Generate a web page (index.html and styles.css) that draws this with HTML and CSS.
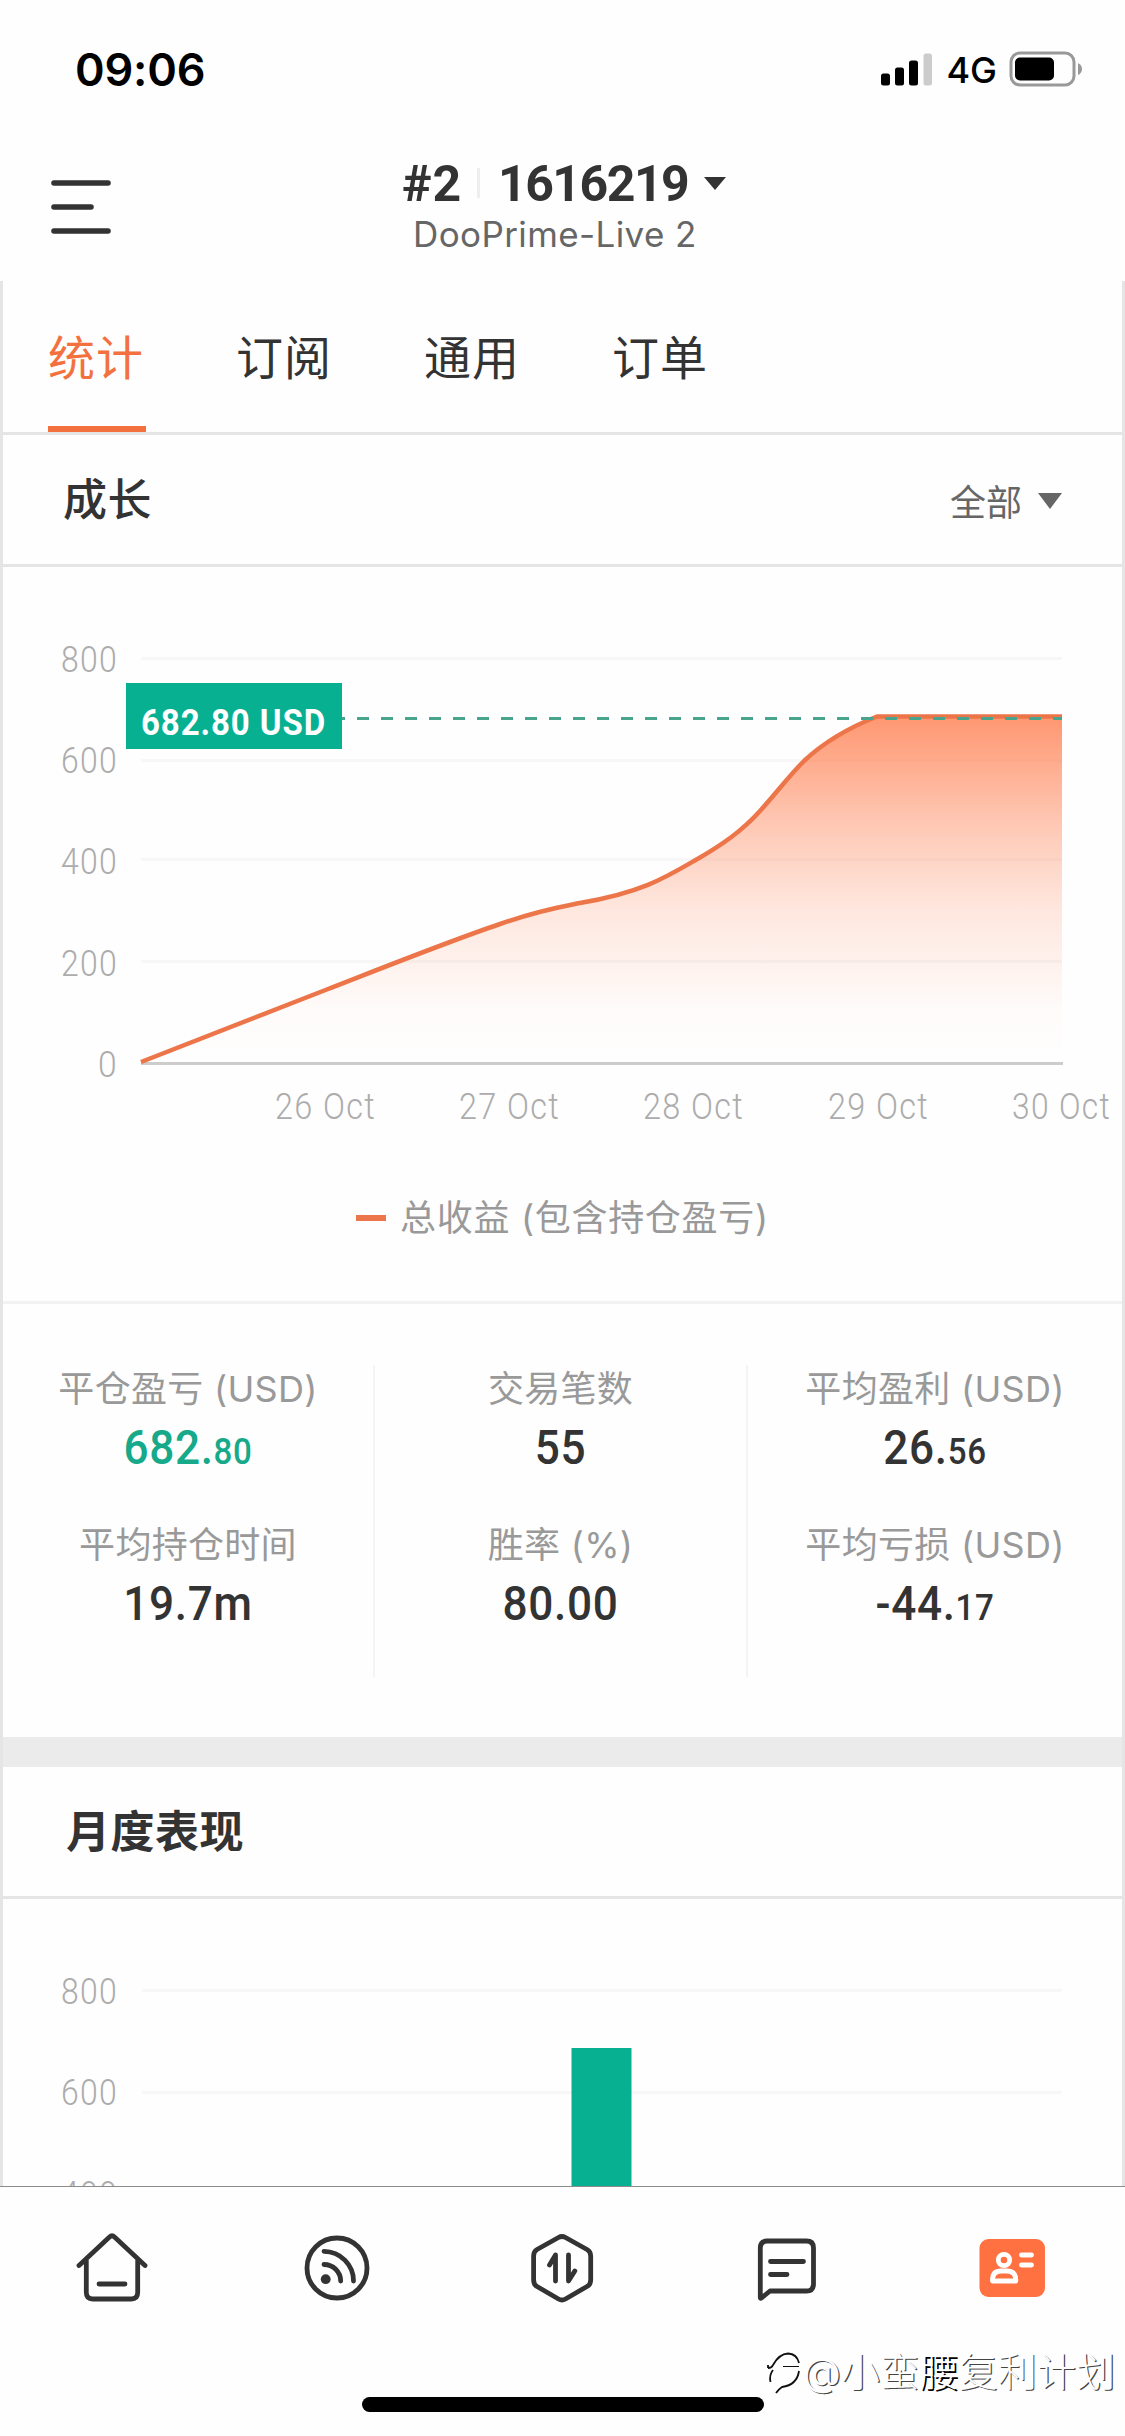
FILE: index.html
```html
<!DOCTYPE html>
<html lang="zh-CN">
<head>
<meta charset="utf-8">
<title>DooPrime-Live 2</title>
<link rel="stylesheet" href="styles.css">
</head>
<body>
<div class="phone">
  <header class="status">
    <span class="clock">09:06</span>
    <div class="status-icons">
      <svg class="signal" width="51" height="33" viewBox="0 0 51 33">
        <rect x="0" y="20.500" width="9" height="12" rx="2.500"/>
        <rect x="14" y="14.500" width="9" height="18" rx="2.500"/>
        <rect x="28" y="7.500" width="9" height="25" rx="2.500"/>
        <rect x="42.500" y="0.500" width="8.500" height="32" rx="2.500" fill="#ccc"/>
      </svg>
      <span class="network">4G</span>
      <svg class="battery" width="74" height="36" viewBox="0 0 74 36">
        <rect x="2" y="2" width="63" height="32" rx="9" fill="none" stroke="#999" stroke-width="3"/>
        <rect x="6" y="6.500" width="39" height="23" rx="5"/>
        <path d="M69 12 Q73 14 73 18 Q73 22 69 24 Z" fill="#999"/>
      </svg>
    </div>
  </header>

  <div class="topbar">
    <svg class="menu" width="62" height="56" viewBox="0 0 62 56" stroke="#333" stroke-width="5.600" stroke-linecap="round">
      <path d="M3 4H57M3 28H40M3 52H57"/>
    </svg>
    <div class="account">
      <div class="account-id">
        <span class="num rank">#2</span><i class="sep"></i><span class="num login">1616219</span>
        <svg width="22" height="13" viewBox="0 0 22 13"><path d="M0 0H22L11 13Z" fill="#333"/></svg>
      </div>
      <div class="server">DooPrime-Live 2</div>
    </div>
  </div>

  <main class="content">
    <nav class="tabs">
      <span class="tab active">统计</span><span class="tab">订阅</span><span class="tab">通用</span><span class="tab">订单</span>
    </nav>

    <section>
      <div class="section-head">
        <h2>成长</h2>
        <span class="filter">全部<svg width="24" height="16" viewBox="0 0 24 16"><path d="M0 0H24L12 16Z" fill="#666"/></svg></span>
      </div>
      <svg class="growth" width="1119" height="593" viewBox="3 567 1119 593">
        <defs>
          <linearGradient id="area" gradientUnits="userSpaceOnUse" x1="0" y1="717" x2="0" y2="1063">
            <stop offset="0" stop-color="#ff7340" stop-opacity=".74"/>
            <stop offset=".3" stop-color="#ff7340" stop-opacity=".4"/>
            <stop offset=".55" stop-color="#ff7340" stop-opacity=".17"/>
            <stop offset=".85" stop-color="#ff7340" stop-opacity=".02"/>
            <stop offset="1" stop-color="#ff7340" stop-opacity="0"/>
          </linearGradient>
        </defs>
        <path d="M141 658.500H1062M141 760.500H1062M141 859.500H1062M141 961.500H1062" stroke="#f7f7f7" stroke-width="3"/>
        <path d="M141 1063.500H1063" stroke="#ccc" stroke-width="3"/>
        <path d="M141 1062L325.500 990C400 961 450 941 500 924C540 910 560 907 580 903C640 893 665 878 694 861C722 845 742 831 760 811C778 791 789 776 804 761C824 742 848 728 877 716.500H1062V1062Z" fill="url(#area)"/>
        <path d="M141 1062L325.500 990C400 961 450 941 500 924C540 910 560 907 580 903C640 893 665 878 694 861C722 845 742 831 760 811C778 791 789 776 804 761C824 742 848 728 877 716.500H1062" fill="none" stroke="#ec7549" stroke-width="4.500"/>
        <path d="M333 718.500H1062" stroke="#48a48c" stroke-width="3" stroke-dasharray="12 12"/>
        <rect x="126" y="683" width="216" height="66" fill="#08b092"/>
        <text class="badge-text" x="141" y="735" textLength="185" lengthAdjust="spacingAndGlyphs">682.80 USD</text>
        <g class="axis">
          <text x="61" y="672" textLength="57" lengthAdjust="spacingAndGlyphs">800</text>
          <text x="61" y="773" textLength="57" lengthAdjust="spacingAndGlyphs">600</text>
          <text x="61" y="874" textLength="57" lengthAdjust="spacingAndGlyphs">400</text>
          <text x="61" y="976" textLength="57" lengthAdjust="spacingAndGlyphs">200</text>
          <text x="98" y="1077" textLength="20" lengthAdjust="spacingAndGlyphs">0</text>
          <text x="275" y="1119" textLength="101" lengthAdjust="spacingAndGlyphs">26 Oct</text>
          <text x="459" y="1119" textLength="101" lengthAdjust="spacingAndGlyphs">27 Oct</text>
          <text x="643" y="1119" textLength="101" lengthAdjust="spacingAndGlyphs">28 Oct</text>
          <text x="828" y="1119" textLength="101" lengthAdjust="spacingAndGlyphs">29 Oct</text>
          <text x="1012" y="1119" textLength="99" lengthAdjust="spacingAndGlyphs">30 Oct</text>
        </g>
      </svg>
      <div class="legend"><i></i><span>总收益 (包含持仓盈亏)</span></div>
      <div class="stats">
        <div class="col">
          <div class="label">平仓盈亏 (USD)</div><div class="value green">682.<small>80</small></div>
          <div class="label">平均持仓时间</div><div class="value">19.7m</div>
        </div>
        <div class="col">
          <div class="label">交易笔数</div><div class="value">55</div>
          <div class="label">胜率 (%)</div><div class="value">80.00</div>
        </div>
        <div class="col">
          <div class="label">平均盈利 (USD)</div><div class="value">26.<small>56</small></div>
          <div class="label">平均亏损 (USD)</div><div class="value">-44.<small>17</small></div>
        </div>
      </div>
    </section>

    <section class="monthly">
      <div class="section-head"><h2 class="bold">月度表现</h2></div>
      <svg class="bars" width="1119" height="287" viewBox="3 1899 1119 287">
        <path d="M142 1990.500H1062M142 2092.500H1062" stroke="#f7f7f7" stroke-width="3"/>
        <rect x="571.500" y="2048" width="60" height="138" fill="#08b092"/>
        <g class="axis">
          <text x="61" y="2004" textLength="57" lengthAdjust="spacingAndGlyphs">800</text>
          <text x="61" y="2105" textLength="57" lengthAdjust="spacingAndGlyphs">600</text>
          <text x="61" y="2206.500" textLength="57" lengthAdjust="spacingAndGlyphs">400</text>
        </g>
      </svg>
    </section>
  </main>

  <footer class="tabbar">
    <svg class="nav" viewBox="72 2228 80 80">
      <path d="M79 2265.500L109.500 2237Q112 2234.500 114.500 2237L145 2265.500M86.300 2260V2292.500Q86.300 2299 92.800 2299H131.200Q137.700 2299 137.700 2292.500V2260M99 2284H125"/>
    </svg>
    <svg class="nav" viewBox="297 2228 80 80">
      <circle cx="337" cy="2268" r="30"/><path d="M324 2251.300A29.700 29.700 0 0 1 353.500 2281M324 2264.500A16.700 16.700 0 0 1 340.700 2281"/><circle cx="325.700" cy="2279.200" r="4.900" fill="#333" stroke="none"/>
    </svg>
    <svg class="nav" viewBox="522 2228 80 80">
      <path d="M558.500 2237.500Q562 2235.500 565.500 2237.500L587 2249.500Q590.700 2251.500 590.700 2256V2280Q590.700 2284.500 587 2286.500L565.500 2299Q562 2301 558.500 2299L537 2286.500Q533.600 2284.500 533.600 2280V2256Q533.600 2251.500 537 2249.500ZM555.500 2281V2255L549.500 2265M568.500 2255V2281L574.800 2271"/>
    </svg>
    <svg class="nav" viewBox="747 2228 80 80">
      <path d="M760.300 2297.500V2248Q760.300 2241 767.300 2241H806.500Q813.500 2241 813.500 2248V2284Q813.500 2291 806.500 2291H770L761.500 2298Q760.300 2299 760.300 2297.500ZM770.500 2261.500H803.500M770.500 2274.500H787"/>
    </svg>
    <svg class="nav active" viewBox="972 2228 80 80">
      <rect x="979.500" y="2239" width="65.500" height="58" rx="9" fill="#ff7140" stroke="none"/>
      <ellipse cx="1004" cy="2260" rx="5.700" ry="5.700"/><path d="M992.500 2281V2280Q992.500 2271 1001 2271H1007Q1015.800 2271 1015.800 2280V2281ZM1021.500 2255H1031.500M1021.500 2265H1031.500"/>
    </svg>
  </footer>
  <div class="home-indicator"></div>
  <div class="watermark">
    <svg width="36" height="44" viewBox="0 0 36 44" fill="none" stroke="#111" stroke-width="1.800">
      <path d="M2 18Q6 18 7 15Q13 4 22 3.500Q31 4 33 13M2 18V15M7 20Q3 25 4.500 32M33 21Q31 35 16 37Q13 39 10 43"/>
      <path d="M17 16.500H33" stroke-width="1"/>
    </svg>
    <span>@小蛮<b>腰</b>复利计划</span>
  </div>
</div>
</body>
</html>
```
FILE: styles.css
```css
* { box-sizing: border-box; }
body { margin: 0; background: #fff; }
.phone {
  position: relative;
  width: 1125px;
  height: 2436px;
  overflow: hidden;
  display: flex;
  flex-direction: column;
  background: #fefefe;
  color: #333;
  font-family: Inter, "Noto Sans CJK SC", sans-serif;
}
.status {
  height: 138px;
  padding: 0 42px 0 75px;
  display: flex;
  justify-content: space-between;
  align-items: center;
  color: #000;
}
.clock { font-size: 45px; font-weight: 600; letter-spacing: -.2px; }
.status-icons { display: flex; align-items: center; }
.network { font-size: 36px; font-weight: 500; margin: 2px 12px 0 14px; }
.battery, .signal { display: block; }

.topbar { height: 143px; padding-left: 51px; display: flex; align-items: flex-start; }
.menu { margin-top: 41px; }
.account { margin-left: 289px; padding-top: 16px; }
.account-id { height: 60px; display: flex; align-items: center; }
.num { font: 700 50px/60px Roboto, sans-serif; }
.rank { width: 60px; letter-spacing: 1px; }
.login { letter-spacing: -1.5px; }
.sep { width: 3px; height: 30px; margin: -3px 18px 0 15px; background: #eee; }
.account-id svg { margin: -1px 0 0 16px; }
.server { margin: -1px 0 0 11px; font-size: 35px; line-height: 42px; letter-spacing: .4px; color: #666; white-space: nowrap; }

.content { height: 1905px; border: solid #e5e5e5; border-width: 0 3px; overflow: hidden; }
.tabs { height: 154px; padding-left: 45px; border-bottom: 3px solid #e5e5e5; display: flex; gap: 90px; }
.tab { width: 98px; height: 151px; font-size: 47px; line-height: 154px; letter-spacing: 1px; }
.tab.active { color: #f2713f; border-bottom: 6px solid #f2713f; }
.section-head {
  height: 132px;
  padding: 1px 60px 0 60px;
  border-bottom: 3px solid #e5e5e5;
  display: flex;
  justify-content: space-between;
  align-items: center;
}
h2 { margin: 0; font-size: 44px; font-weight: 500; line-height: 1; letter-spacing: .5px; }
h2.bold { font-weight: 600; padding-left: 3px; }
.filter { display: flex; align-items: center; gap: 16px; font-size: 36px; color: #666; }
.filter svg { margin-top: 2px; }
.growth, .bars { display: block; }
.axis { font: 300 36.500px Roboto, sans-serif; fill: #acacac; letter-spacing: 1.500px; }
.badge-text { font: 700 36.500px Roboto, sans-serif; fill: #fff; letter-spacing: 1px; }
.legend {
  height: 144px;
  padding: 35px 0 0 353px;
  border-bottom: 3px solid #f2f2f2;
  display: flex;
  align-items: flex-start;
  gap: 14px;
  color: #999;
  font-size: 36px;
  line-height: 46px;
  letter-spacing: .7px;
}
.legend i { width: 30px; height: 6px; margin-top: 20px; background: #ec7549; }
.stats { height: 433px; padding: 61px 0 60px; display: grid; grid-template-columns: 372px 373px 374px; }
.col { border-right: 2px solid #f4f4f4; text-align: center; }
.col:last-child { border-right: 0; }
.label { height: 52px; font-size: 36px; line-height: 48px; letter-spacing: .3px; color: #999; white-space: nowrap; }
.value { height: 104px; font: 500 48px/62px Roboto, sans-serif; letter-spacing: .7px; transform: scaleX(.92); }
.value small { font-size: 36px; }
.value.green { color: #16a98a; }
.monthly { border-top: 30px solid #ebebeb; }

.tabbar { height: 250px; padding: 41px 0 0 72px; border-top: 1px solid #8c8c8c; background: #fefefe; display: flex; justify-content: flex-start; gap: 145px; }
.nav { width: 80px; height: 80px; flex: none; fill: none; stroke: #333; stroke-width: 4.800px; stroke-linecap: round; stroke-linejoin: round; }
.nav.active { stroke: #fff; }
.home-indicator { position: absolute; left: 362px; top: 2397px; width: 402px; height: 15px; border-radius: 8px; background: #000; }
.watermark {
  position: absolute;
  left: 766px;
  top: 2346px;
  height: 52px;
  display: flex;
  align-items: center;
  gap: 1px;
  color: #fff;
  font-size: 39px;
  font-weight: 300;
  line-height: 52px;
  letter-spacing: .2px;
  white-space: nowrap;
  text-shadow: 1.200px 1px 0 #444;
}
.watermark b { font-weight: 300; text-shadow: 2px 1.500px 0 #000; }
```
